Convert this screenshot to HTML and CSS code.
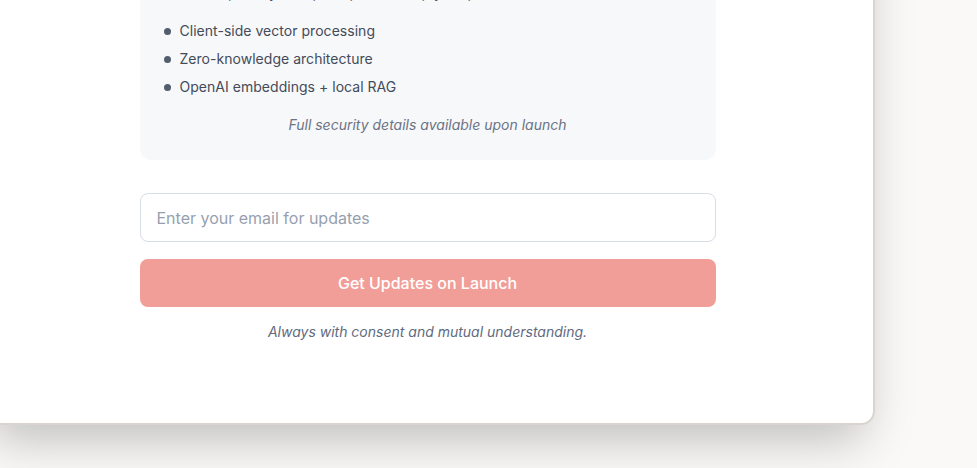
FILE: index.html
```html
<!DOCTYPE html>
<html lang="en">
<head>
<meta charset="utf-8">
<title>Get Updates</title>
<link rel="stylesheet" href="styles.css">
</head>
<body>
<div class="page">
  <section class="card">
    <div class="content">
      <div class="info">
        <p class="intro">Built with privacy-first principles to keep your personal data safe:</p>
        <ul class="list">
          <li>Client-side vector processing</li>
          <li>Zero-knowledge architecture</li>
          <li>OpenAI embeddings + local RAG</li>
        </ul>
        <p class="note">Full security details available upon launch</p>
      </div>
      <form class="form">
        <input class="email" type="email" placeholder="Enter your email for updates">
        <button class="btn" type="button">Get Updates on Launch</button>
      </form>
      <p class="consent">Always with consent and mutual understanding.</p>
    </div>
  </section>
</div>
</body>
</html>
```

FILE: styles.css
```css
* { box-sizing: border-box; }
html, body { margin: 0; padding: 0; }
body {
  background: #faf9f7;
  font-family: Inter, "Noto Sans", sans-serif;
  overflow: hidden;
  height: 468px;
}
.page { padding: 0; }
.card {
  margin-top: -100px;
  margin-left: -20px;
  width: 895px;
  background: #ffffff;
  border: 2px solid #d9d4cf;
  border-radius: 14px;
  box-shadow: 0 25px 50px -12px rgba(0, 0, 0, 0.25);
  padding: 55px 0 81px;
}
.content {
  width: 576px;
  margin: 0 auto;
}
.info {
  background: #f7f8fa;
  border-radius: 12px;
  padding: 24px 24px 25px;
}
.intro {
  margin: 0;
  font-size: 14px;
  line-height: 24px;
  color: #444b59;
}
.list {
  list-style: none;
  margin: 12px 0 0;
  padding: 0;
}
.list li {
  display: flex;
  align-items: center;
  gap: 9px;
  font-size: 14px;
  letter-spacing: 0.03px;
  line-height: 28px;
  color: #444b59;
}
.list li::before {
  content: "";
  width: 7px;
  height: 7px;
  border-radius: 50%;
  background: #525d6e;
  flex: none;
}
.note {
  margin: 14px 0 0;
  text-align: center;
  font-style: italic;
  font-size: 14px;
  line-height: 20px;
  color: #6b7385;
}
.form {
  margin-top: 33px;
  display: flex;
  flex-direction: column;
  gap: 17px;
}
.email {
  height: 49px;
  width: 100%;
  border: 1px solid #d8dde6;
  border-radius: 8px;
  padding: 0 16px;
  font-family: inherit;
  font-size: 16px;
  color: #374151;
  background: #fff;
  outline: none;
}
.email::placeholder { color: #979faf; }
.btn {
  height: 48px;
  width: 100%;
  border: none;
  border-radius: 8px;
  background: #f29e98;
  color: #ffffff;
  font-family: inherit;
  font-size: 16px;
  font-weight: 500;
}
.consent {
  margin: 15px 0 0;
  text-align: center;
  font-style: italic;
  font-size: 14px;
  line-height: 20px;
  color: #5f6b80;
}
```
